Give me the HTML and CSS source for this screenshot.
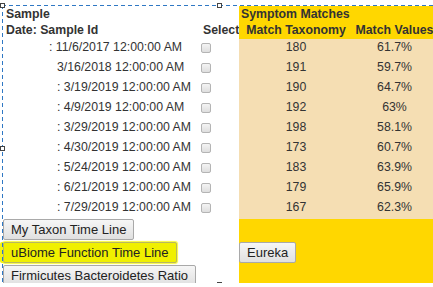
FILE: index.html
```html
<!DOCTYPE html>
<html lang="en">
<head>
  <meta charset="UTF-8">
  <meta name="viewport" content="width=device-width, initial-scale=1.0">
  <title>Sample Matches</title>
  <link rel="stylesheet" href="styles.css">
</head>
<body>

  <div class="designer">

    <!-- Samples and time line buttons -->
    <div class="panel-left">
      <table class="samples">
        <colgroup><col class="col-date"><col class="col-select"></colgroup>
        <tr class="head-row first-head"><th colspan="2">Sample</th></tr>
        <tr class="head-row"><th>Date: Sample Id</th><th class="select-head">Select</th></tr>
        <tr><td class="date shift">: 11/6/2017 12:00:00 AM</td><td><input type="checkbox"></td></tr>
        <tr><td class="date">3/16/2018 12:00:00 AM</td><td><input type="checkbox"></td></tr>
        <tr><td class="date">: 3/19/2019 12:00:00 AM</td><td><input type="checkbox"></td></tr>
        <tr><td class="date">: 4/9/2019 12:00:00 AM</td><td><input type="checkbox"></td></tr>
        <tr><td class="date">: 3/29/2019 12:00:00 AM</td><td><input type="checkbox"></td></tr>
        <tr><td class="date">: 4/30/2019 12:00:00 AM</td><td><input type="checkbox"></td></tr>
        <tr><td class="date">: 5/24/2019 12:00:00 AM</td><td><input type="checkbox"></td></tr>
        <tr><td class="date">: 6/21/2019 12:00:00 AM</td><td><input type="checkbox"></td></tr>
        <tr><td class="date">: 7/29/2019 12:00:00 AM</td><td><input type="checkbox"></td></tr>
      </table>

      <div class="actions">
        <button>My Taxon Time Line</button>
        <button class="marked">uBiome Function Time Line</button>
        <button>Firmicutes Bacteroidetes Ratio</button>
      </div>
    </div>

    <!-- Symptom matches -->
    <div class="panel-right">
      <table class="matches">
        <colgroup><col class="col-tax"><col class="col-val"></colgroup>
        <tr class="head-row first-head"><th colspan="2" class="title">Symptom Matches</th></tr>
        <tr class="head-row"><th>Match Taxonomy</th><th>Match Values</th></tr>
        <tr><td>180</td><td>61.7%</td></tr>
        <tr><td>191</td><td>59.7%</td></tr>
        <tr><td>190</td><td>64.7%</td></tr>
        <tr><td>192</td><td>63%</td></tr>
        <tr><td>198</td><td>58.1%</td></tr>
        <tr><td>173</td><td>60.7%</td></tr>
        <tr><td>183</td><td>63.9%</td></tr>
        <tr><td>179</td><td>65.9%</td></tr>
        <tr><td>167</td><td>62.3%</td></tr>
      </table>
      <button class="eureka">Eureka</button>
    </div>

    <!-- selection handles -->
    <span class="handle handle-tl"></span>
    <span class="handle handle-tm"></span>
    <span class="handle handle-lm"></span>
    <span class="handle handle-bm"></span>
  </div>

</body>
</html>
```

FILE: styles.css
```css
html, body {
  overflow: hidden;
}

body {
  margin: 0;
  background-color: #fff;
  font-family: "Liberation Sans", Arial, sans-serif;
  color: #333;
}

/* Designer selection frame */
.designer {
  position: relative;
  display: flex;
  width: 433px;
  height: 277px;
  margin: 6px 0 0 3px;
}

.designer::after {
  content: "";
  position: absolute;
  z-index: 1;
  inset: -1px;
  pointer-events: none;
  background:
    repeating-linear-gradient(90deg, #2f78c4 0 4px, transparent 4px 7px) top left / 100% 1px no-repeat,
    repeating-linear-gradient(90deg, #2f78c4 0 4px, transparent 4px 7px) bottom left / 100% 1px no-repeat,
    repeating-linear-gradient(180deg, #2f78c4 0 4px, transparent 4px 7px) top left / 1px 100% no-repeat,
    repeating-linear-gradient(180deg, #2f78c4 0 4px, transparent 4px 7px) top right / 1px 100% no-repeat;
}

.handle {
  position: absolute;
  z-index: 2;
  width: 3px;
  height: 3px;
  background-color: #fff;
  border: 1px solid #444;
}

.handle-tl { left: -3px; top: -3px; }
.handle-tm { left: 214px; top: -3px; }
.handle-lm { left: -3px; top: 140px; }
.handle-bm { left: 214px; top: 276px; }

/* Tables */
table {
  border-collapse: collapse;
  border-spacing: 0;
  table-layout: fixed;
  font-size: 12.3px;
}

th, td {
  padding: 0;
  height: 20px;
  line-height: 16px;
  vertical-align: top;
  white-space: nowrap;
}

.head-row th {
  height: 17px;
  line-height: 17px;
  font-weight: bold;
  text-align: left;
}

.first-head th {
  height: 16px;
  line-height: 16px;
}

/* Left side */
.panel-left {
  width: 236px;
  flex-shrink: 0;
}

.samples {
  width: 236px;
}

.col-date { width: 197px; }
.col-select { width: 39px; }

.samples th {
  padding-left: 3px;
}

.samples .date {
  padding-left: 54px;
}

.samples .date.shift {
  text-indent: -8px;
}

.samples input[type="checkbox"] {
  appearance: none;
  -webkit-appearance: none;
  display: block;
  width: 10px;
  height: 10px;
  margin: 4px 0 0 1px;
  border: 1px solid #b4b4b4;
  border-radius: 2px;
  background: linear-gradient(#f4f4f4, #dedede);
}

.actions {
  display: flex;
  flex-direction: column;
  align-items: flex-start;
}

button {
  height: 21px;
  padding: 0 7px;
  font-family: "Liberation Sans", Arial, sans-serif;
  font-size: 13px;
  color: #222;
  background: linear-gradient(#f6f6f6, #e0e0e0);
  border: 1px solid #a9a9a9;
  border-radius: 2px;
}

.actions button + button {
  margin-top: 2px;
}

.actions .marked {
  background: #f0f000;
  border-color: #b8b860;
  box-shadow: -3px 0 0 #f4f410, 0 0 1px 1px #f8f840;
}

/* Right side */
.panel-right {
  width: 197px;
  flex-shrink: 0;
  background-color: #ffd700;
}

.matches {
  width: 197px;
}

.col-tax { width: 114px; }
.col-val { width: 83px; }

.matches .head-row th {
  text-align: center;
}

.matches .head-row th.title {
  text-align: left;
  padding-left: 2px;
}

.matches td {
  text-align: center;
  background-color: #f5deb3;
}

.eureka {
  display: block;
  margin-top: 23px;
}
```
